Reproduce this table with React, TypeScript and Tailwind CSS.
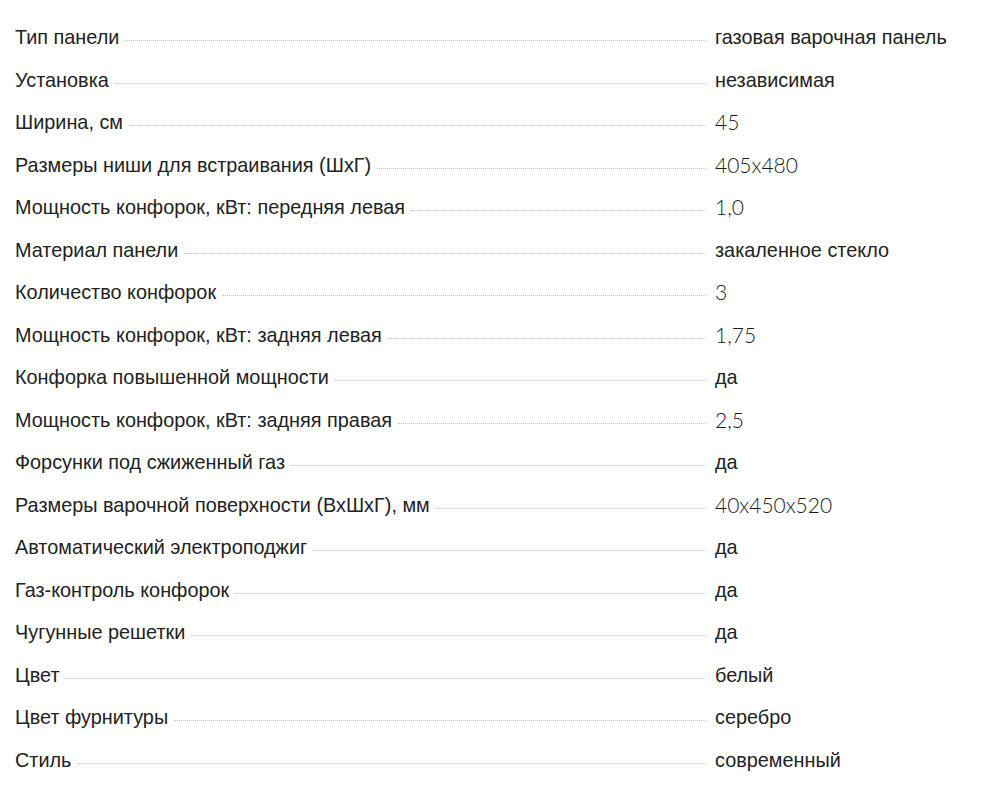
const specs: [string, string][] = [
  ['Тип панели', 'газовая варочная панель'],
  ['Установка', 'независимая'],
  ['Ширина, см', '45'],
  ['Размеры ниши для встраивания (ШхГ)', '405x480'],
  ['Мощность конфорок, кВт: передняя левая', '1,0'],
  ['Материал панели', 'закаленное стекло'],
  ['Количество конфорок', '3'],
  ['Мощность конфорок, кВт: задняя левая', '1,75'],
  ['Конфорка повышенной мощности', 'да'],
  ['Мощность конфорок, кВт: задняя правая', '2,5'],
  ['Форсунки под сжиженный газ', 'да'],
  ['Размеры варочной поверхности (ВхШхГ), мм', '40x450x520'],
  ['Автоматический электроподжиг', 'да'],
  ['Газ-контроль конфорок', 'да'],
  ['Чугунные решетки', 'да'],
  ['Цвет', 'белый'],
  ['Цвет фурнитуры', 'серебро'],
  ['Стиль', 'современный'],
]

function SpecRow({ label, value }: { label: string; value: string }) {
  const numeric = /^[\d,x]+$/.test(value)
  return (
    <div className="flex h-[42.5px] items-center">
      <span className="shrink-0 pr-[6px]">{label}</span>
      <div className="mt-[7px] h-0 flex-1 border-b border-dotted border-[#c4c4c4]" />
      <span
        className={
          numeric
            ? "w-[291px] shrink-0 pl-[9px] font-['Lato',sans-serif] text-[21px] font-light text-[#1a1a1a]"
            : 'w-[291px] shrink-0 pl-[9px]'
        }
      >
        {value}
      </span>
    </div>
  )
}

export default function App() {
  return (
    <div className="min-h-[796px] w-[997px] bg-white pl-[15px] pt-[16px] font-['Liberation_Sans',Arial,sans-serif] text-[19.85px] leading-[24px] text-[#222]">
      {specs.map(([l, v]) => (
        <SpecRow key={l} label={l} value={v} />
      ))}
    </div>
  )
}
